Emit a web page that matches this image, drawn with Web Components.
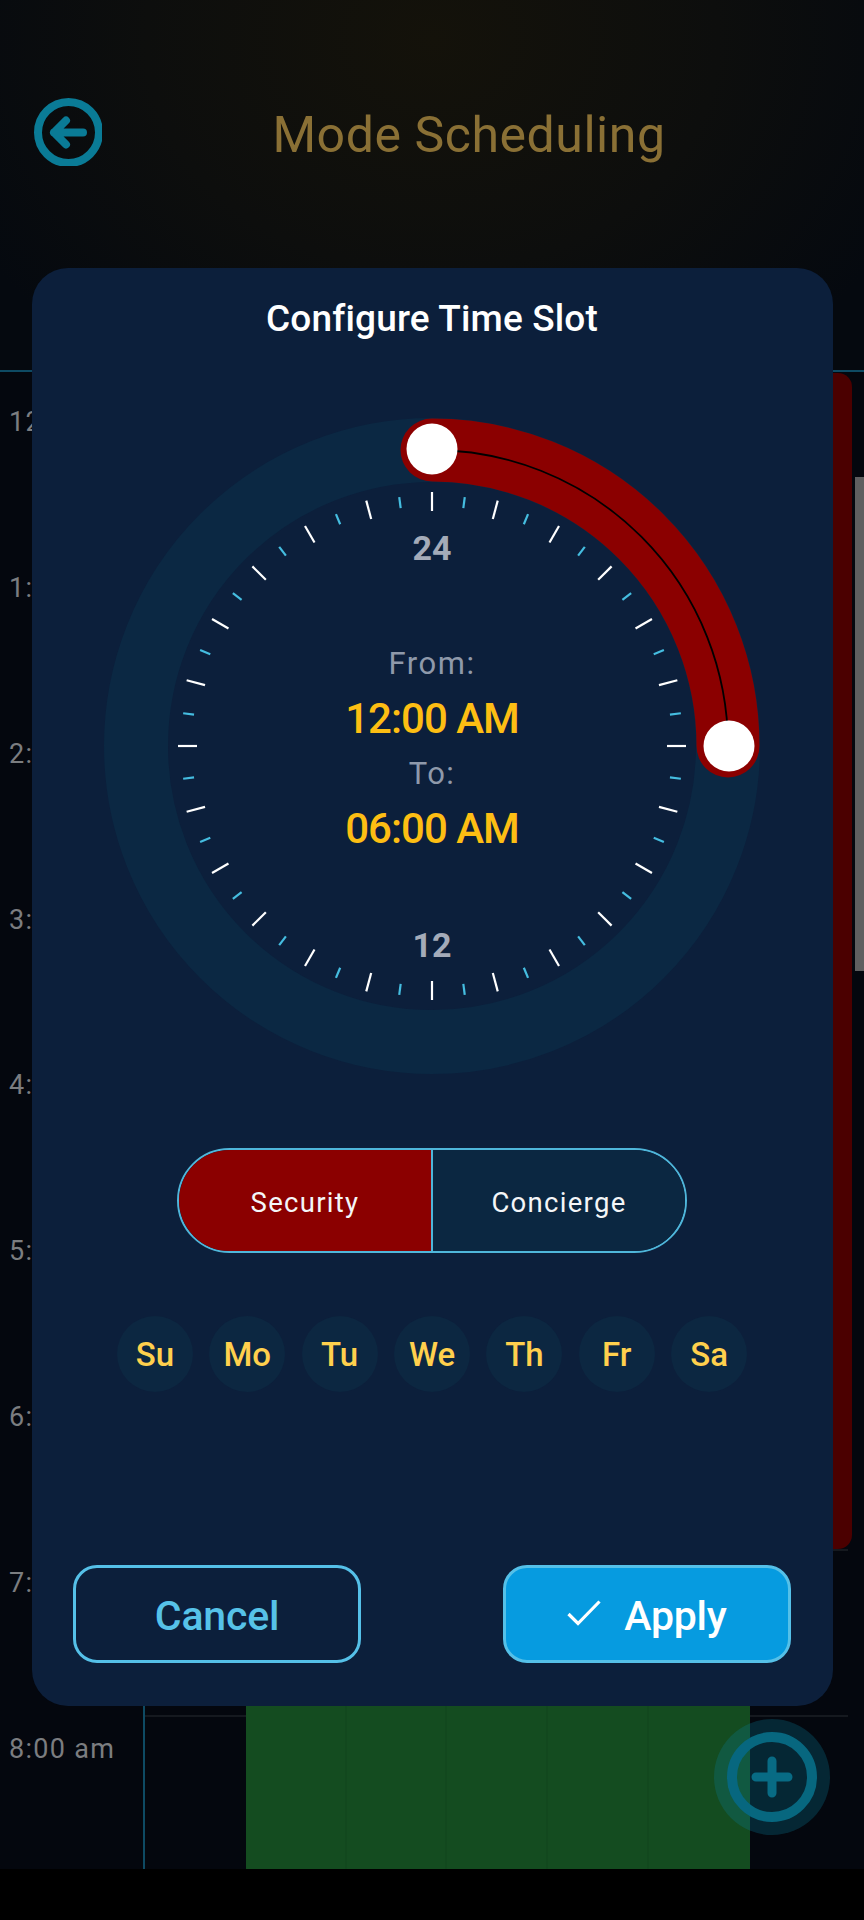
<!DOCTYPE html>
<html>
<head>
<meta charset="utf-8">
<title>Mode Scheduling</title>
<style>
  html, body { margin: 0; background: #000; font-family: Roboto, "Liberation Sans", sans-serif; }
</style>
</head>
<body>
<schedule-screen>
  <slot-dialog heading="Configure Time Slot">
    <time-dial from="12:00 AM" to="06:00 AM"></time-dial>
    <mode-toggle></mode-toggle>
    <day-picker></day-picker>
    <div slot="actions" style="display:flex;justify-content:space-between">
      <action-button label="Cancel"></action-button>
      <action-button label="Apply" primary></action-button>
    </div>
  </slot-dialog>
</schedule-screen>

<script>
const HOURS = ['12:00 am', '1:00 am', '2:00 am', '3:00 am', '4:00 am', '5:00 am', '6:00 am', '7:00 am', '8:00 am'];

class ScheduleScreen extends HTMLElement {
  constructor() {
    super();
    this.attachShadow({ mode: 'open' });
  }

  connectedCallback() {
    this.shadowRoot.innerHTML = `
      <style>
        :host { display: flex; flex-direction: column; position: relative; width: 864px; height: 1920px; overflow: hidden; background: #000; }
        .top { height: 372px; flex: none; display: flex; align-items: flex-start; box-sizing: border-box; padding: 98px 28px 0 34px; border-bottom: 2px solid #0e4a63;
               background: radial-gradient(ellipse 520px 420px at 50% 40px, #14120a 0%, #0d0e0d 55%, #05090f 100%); }
        .back { width: 68px; height: 68px; flex: none; }
        h1 { flex: 1; margin: 9px 0 0; text-align: center; font: 400 50px/56px Roboto, sans-serif; letter-spacing: .55px; color: #8a7035; }
        .body { height: 1497px; flex: none; display: flex; background: #04070e; }
        .scrollbar { position: absolute; left: 855px; top: 477px; width: 9px; height: 494px; background: #5f5f60; }
        .nav { flex: 1; background: #000; }
        .fab { position: absolute; left: 714px; top: 1718.5px; width: 116px; height: 116px; }
        time-grid { flex: 1; }
      </style>
      <div class="top">
        <svg class="back" viewBox="0 0 68 68" fill="none" stroke="#0a7b96" stroke-linecap="round" stroke-linejoin="round">
          <circle cx="34.5" cy="34.5" r="30.5" stroke-width="8"/>
          <path d="M49 34.5H20M32 22.5L20 34.5L32 46.5" stroke-width="8"/>
        </svg>
        <h1>Mode Scheduling</h1>
      </div>
      <div class="body"><time-grid></time-grid></div>
      <div class="nav"></div>
      <div class="scrollbar"></div>
      <svg class="fab" viewBox="0 0 116 116" fill="none">
        <circle cx="58" cy="58" r="58" fill="#0a7f9c" fill-opacity=".27"/>
        <circle cx="58" cy="58" r="40" stroke="#07677f" stroke-width="10"/>
        <path d="M58 42V74M42 58H74" stroke="#086b84" stroke-width="9" stroke-linecap="round"/>
      </svg>
      <slot></slot>`;
  }
}

class TimeGrid extends HTMLElement {
  constructor() {
    super();
    this.attachShadow({ mode: 'open' });
  }

  connectedCallback() {
    this.shadowRoot.innerHTML = `
      <style>
        :host { display: flex; height: 100%; overflow: hidden; }
        .times { width: 145px; flex: none; box-sizing: border-box; padding-top: 16px; border-right: 2px solid #0e4a63; }
        .times div { height: 165.85px; box-sizing: border-box; padding: 18px 0 0 9px; font: 400 27px/32px Roboto, sans-serif; letter-spacing: 1.3px; color: #7b7d80; white-space: nowrap; }
        .week { flex: 1; display: grid; grid-template-columns: repeat(7, 100.8px); grid-template-rows: 16px repeat(8, 165.85px) 1fr; }
        .rule { grid-column: 1 / -1; border-top: 2px solid #15191f; margin-right: 3px; }
        .red { grid-column: 7; grid-row: 1 / 9; margin: 1px -1.4px 0 0; width: 20px; background: #4b0000; border-radius: 0 14px 14px 0; justify-self: end; }
        .green { grid-column: 2 / 7; grid-row: 9 / 11; display: grid; grid-template-columns: repeat(5, 1fr); background: #144c20; }
        .green i { border-right: 2px solid #12481e; }
        .green i:last-child { border: 0; }
      </style>
      <div class="times">${HOURS.map(h => `<div>${h}</div>`).join('')}</div>
      <div class="week">
        ${HOURS.map((h, i) => `<div class="rule" style="grid-row:${i + 2}"></div>`).join('')}
        <div class="red"></div>
        <div class="green"><i></i><i></i><i></i><i></i><i></i></div>
      </div>`;
  }
}

class SlotDialog extends HTMLElement {
  constructor() {
    super();
    this.attachShadow({ mode: 'open' });
  }

  connectedCallback() {
    this.shadowRoot.innerHTML = `
      <style>
        :host { position: absolute; z-index: 5; left: 32px; top: 268px; width: 801px; height: 1438px; box-sizing: border-box; padding: 26px 42px 43px 41px;
                display: flex; flex-direction: column; background: #0c1f3b; border-radius: 36px; }
        h2 { margin: 0 0 72px; text-align: center; font: 500 37px/50px Roboto, sans-serif; color: #fff; letter-spacing: .15px; }
        .actions { margin-top: auto; }
      </style>
      <h2>${this.getAttribute('heading')}</h2>
      <slot></slot>
      <div class="actions"><slot name="actions"></slot></div>`;
  }
}

class TimeDial extends HTMLElement {
  constructor() {
    super();
    this.attachShadow({ mode: 'open' });
  }

  ticks() {
    let out = '';
    for (let i = 0; i < 48; i++) {
      const major = i % 2 === 0;
      const a = i * 7.5 * Math.PI / 180;
      const r1 = major ? 235 : 240;
      const r2 = major ? 254 : 251;
      const p = r => `${(330 + r * Math.sin(a)).toFixed(2)} ${(330 - r * Math.cos(a)).toFixed(2)}`;
      out += `<path d="M${p(r1)}L${p(r2)}" stroke="${major ? '#ffffff' : '#45bde0'}" stroke-width="2.2"/>`;
    }
    return out;
  }

  connectedCallback() {
    this.shadowRoot.innerHTML = `
      <style>
        :host { display: grid; justify-items: center; align-items: center; height: 660px; margin-bottom: 72px; }
        svg, .read { grid-area: 1 / 1; }
        svg { width: 660px; height: 660px; display: block; }
        text { font: 700 34px Roboto, sans-serif; fill: #a4abb9; text-anchor: middle; }
        .read { display: flex; flex-direction: column; align-items: center; }
        .read div { height: 55px; line-height: 55px; }
        .lab { font: 400 31px/55px Roboto, sans-serif; color: #8f99aa; letter-spacing: 1.5px; }
        .val { font: 500 42px/55px Roboto, sans-serif; color: #fdbe13; letter-spacing: -1px; }
      </style>
      <svg viewBox="0 0 660 660" fill="none">
        <circle cx="330" cy="330" r="296" stroke="#0b2843" stroke-width="64"/>
        <path d="M330 34A296 296 0 0 1 626 330" stroke="#8b0000" stroke-width="63" stroke-linecap="round"/>
        <path d="M330 34A296 296 0 0 1 626 330" stroke="#000" stroke-width="1.8"/>
        ${this.ticks()}
        <text x="330" y="144">24</text>
        <text x="330" y="541">12</text>
        <circle cx="330" cy="33" r="25.5" fill="#fff"/>
        <circle cx="627" cy="330" r="25.5" fill="#fff"/>
      </svg>
      <div class="read">
        <div class="lab">From:</div>
        <div class="val">${this.getAttribute('from')}</div>
        <div class="lab">To:</div>
        <div class="val">${this.getAttribute('to')}</div>
      </div>`;
  }
}

class ModeToggle extends HTMLElement {
  constructor() {
    super();
    this.attachShadow({ mode: 'open' });
  }

  connectedCallback() {
    this.shadowRoot.innerHTML = `
      <style>
        :host { display: flex; align-self: center; width: 510px; height: 105px; box-sizing: border-box; border: 2.5px solid #4fb6da; border-radius: 53px; overflow: hidden; margin-bottom: 63px; }
        div { flex: 1; display: flex; align-items: center; justify-content: center; padding-top: 4px; font: 400 27.5px Roboto, sans-serif; letter-spacing: 1.3px; color: #f4f6f8; background: #0b2741; }
        .on { background: #8b0000; border-right: 2.5px solid #4fb6da; }
      </style>
      <div class="on">Security</div><div>Concierge</div>`;
  }
}

class DayPicker extends HTMLElement {
  constructor() {
    super();
    this.attachShadow({ mode: 'open' });
  }

  connectedCallback() {
    const days = ['Su', 'Mo', 'Tu', 'We', 'Th', 'Fr', 'Sa'];
    this.shadowRoot.innerHTML = `
      <style>
        :host { display: flex; justify-content: center; gap: 16.4px; }
        div { width: 76px; height: 76px; border-radius: 50%; background: #0c2741; display: flex; align-items: center; justify-content: center;
              font: 500 33px Roboto, sans-serif; color: #ffd04d; }
      </style>
      ${days.map(d => `<div>${d}</div>`).join('')}`;
  }
}

class ActionButton extends HTMLElement {
  constructor() {
    super();
    this.attachShadow({ mode: 'open' });
  }

  connectedCallback() {
    const primary = this.hasAttribute('primary');
    this.shadowRoot.innerHTML = `
      <style>
        :host { display: flex; align-items: center; justify-content: center; gap: 23px; width: 288px; height: 98px; box-sizing: border-box; padding-top: 4px; border: 3px solid #55c0e8; border-radius: 24px;
                font: 500 41px Roboto, sans-serif; letter-spacing: -.2px; color: ${primary ? '#fff' : '#56c2e8'}; background: ${primary ? '#069be0' : 'transparent'}; }
        svg { width: 34px; height: 26px; margin-top: -6px; }
      </style>
      ${primary ? '<svg viewBox="0 0 34 26" fill="none"><path d="M1.5 14L11 23.5L32.5 1.5" stroke="#fff" stroke-width="3.2"/></svg>' : ''}
      <span>${this.getAttribute('label')}</span>`;
  }
}

customElements.define('time-grid', TimeGrid);
customElements.define('time-dial', TimeDial);
customElements.define('mode-toggle', ModeToggle);
customElements.define('day-picker', DayPicker);
customElements.define('action-button', ActionButton);
customElements.define('slot-dialog', SlotDialog);
customElements.define('schedule-screen', ScheduleScreen);
</script>
</body>
</html>
